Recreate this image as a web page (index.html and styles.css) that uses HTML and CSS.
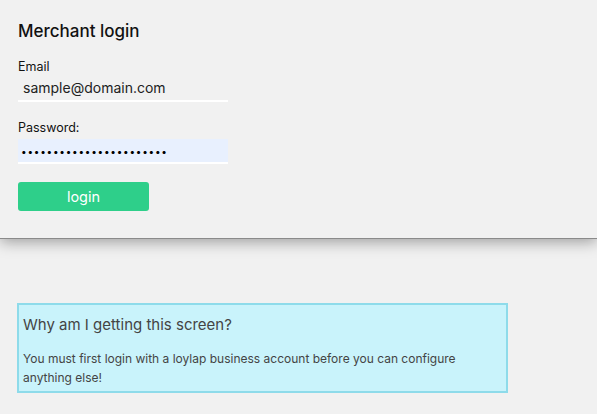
FILE: index.html
```html
<!DOCTYPE html>
<html>
<head>
<meta charset="utf-8">
<link rel="stylesheet" href="styles.css">
</head>
<body>
<div class="card">
  <h1 class="title">Merchant login</h1>
  <div class="field">
    <label class="label">Email</label>
    <div class="input">sample@domain.com</div>
  </div>
  <div class="field pw">
    <label class="label">Password:</label>
    <div class="input filled">•••••••••••••••••••••••</div>
  </div>
  <button class="btn">login</button>
</div>
<div class="info">
  <h2 class="info-title">Why am I getting this screen?</h2>
  <p class="info-text">You must first login with a loylap business account before you can configure anything else!</p>
</div>
</body>
</html>
```
FILE: styles.css
```css
html, body { margin: 0; padding: 0; }
body {
  background: #f1f1f1;
  font-family: "Inter", "Liberation Sans", sans-serif;
  color: #111;
  width: 597px;
  height: 414px;
  overflow: hidden;
}
.card {
  background: #f1f1f1;
  height: 239px;
  border-bottom: 1px solid #8a8a8a;
  padding: 20px 18px 0;
  box-sizing: border-box;
  box-shadow: 0 3px 14px rgba(0,0,0,0.35);
  position: relative;
}
.title {
  margin: 0;
  font-size: 17px;
  font-weight: 500;
  line-height: 22px;
  color: #111;
}
.field { margin-top: 17px; width: 210px; }
.field.pw { margin-top: 18px; }
.label {
  display: block;
  font-size: 12.5px;
  line-height: 16px;
  color: #111;
}
.input {
  border-bottom: 2px solid #fff;
  padding-left: 5px;
  font-size: 14px;
  line-height: 26px;
  color: #222;
  box-sizing: border-box;
  height: 27px;
}
.input.filled {
  background: #e8f0fe;
  margin-top: 3px;
  height: 25px;
  line-height: 24px;
  font-size: 10px;
  letter-spacing: 0.75px;
  color: #000;
  padding-left: 3px;
}
.btn {
  display: block;
  margin-top: 18px;
  width: 131px;
  height: 29px;
  border: none;
  border-radius: 3px;
  background: #2ecf8a;
  color: #fff;
  font-family: inherit;
  font-size: 14.5px;
  font-weight: 400;
  padding: 0;
}
.info {
  margin: 64px 0 0 17px;
  width: 491px;
  height: 90px;
  box-sizing: border-box;
  background: #c9f3fb;
  border: 2px solid #8edbea;
  padding: 10px 4px 0;
  color: #444;
}
.info-title {
  margin: 0;
  font-size: 15px;
  font-weight: 400;
  line-height: 20px;
}
.info-text {
  margin: 14px 0 0;
  font-size: 12px;
  line-height: 19px;
  padding-right: 20px;
}
```
